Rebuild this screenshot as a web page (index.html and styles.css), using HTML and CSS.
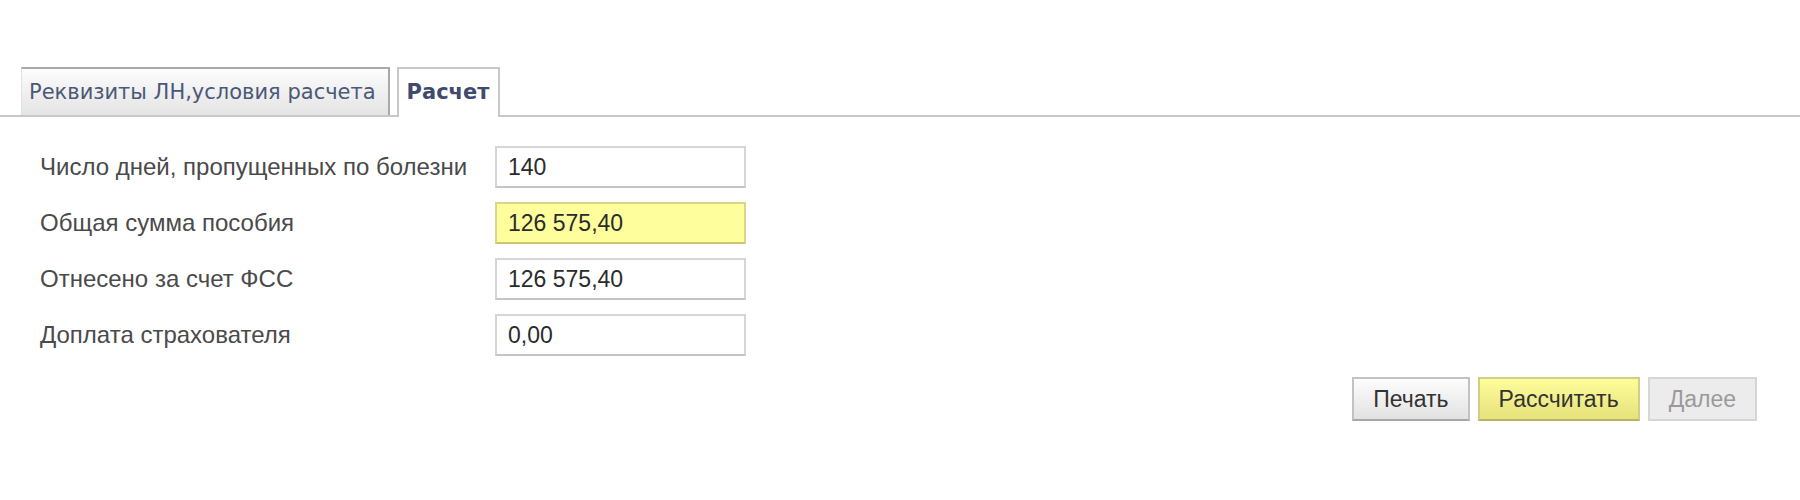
FILE: index.html
```html
<!DOCTYPE html>
<html lang="ru">
<head>
    <meta charset="UTF-8">
    <title>Расчет пособия</title>
    <link rel="stylesheet" href="styles.css">
</head>
<body>
    <div class="page">
        <div class="tabs">
            <div class="tab">Реквизиты ЛН,условия расчета</div>
            <div class="tab tab-active">Расчет</div>
        </div>

        <div class="form">
            <label class="field-label" for="days">Число дней, пропущенных по болезни</label>
            <input class="field" id="days" type="text" value="140">

            <label class="field-label" for="total">Общая сумма пособия</label>
            <input class="field field-highlight" id="total" type="text" value="126 575,40">

            <label class="field-label" for="fss">Отнесено за счет ФСС</label>
            <input class="field" id="fss" type="text" value="126 575,40">

            <label class="field-label" for="extra">Доплата страхователя</label>
            <input class="field" id="extra" type="text" value="0,00">
        </div>

        <div class="actions">
            <button class="btn">Печать</button>
            <button class="btn btn-primary">Рассчитать</button>
            <button class="btn" disabled>Далее</button>
        </div>
    </div>
</body>
</html>
```

FILE: styles.css
```css
html, body {
    margin: 0;
    padding: 0;
    background: #fff;
    font-family: "Liberation Sans", Arial, sans-serif;
    color: #4a4a4a;
}

.page {
    padding-top: 67px;
}

.tabs {
    display: flex;
    gap: 7px;
    padding-left: 21px;
    border-bottom: 2px solid #c8c8c8;
    height: 48px;
}

.tab {
    box-sizing: border-box;
    height: 48px;
    padding: 0 12px 0 7px;
    font-family: "DejaVu Sans", Verdana, sans-serif;
    font-size: 21px;
    line-height: 46px;
    color: #4b5878;
    background: linear-gradient(#fcfcfc, #e4e4e4);
    border-top: 2px solid #a9a9a9;
    border-right: 2px solid #a9a9a9;
    border-left: 1px solid #e2e2e2;
}

.tab-active {
    height: 50px;
    padding: 0 9px 0 8px;
    font-weight: bold;
    color: #3f4b6e;
    background: #fff;
    border: 2px solid #c8c8c8;
    border-bottom: none;
}

.form {
    display: grid;
    grid-template-columns: 455px 251px;
    row-gap: 14px;
    align-items: center;
    padding: 29px 0 0 40px;
}

.field-label {
    font-size: 24px;
}

.field {
    box-sizing: border-box;
    height: 42px;
    width: 251px;
    margin: 0;
    padding: 0 11px;
    font-family: "Liberation Sans", Arial, sans-serif;
    font-size: 23px;
    color: #2b2b2b;
    background: #fff;
    border: 2px solid #d6d6d6;
    border-bottom-color: #c4c4c4;
    outline: none;
}

.field-highlight {
    background: #fefe9c;
    border-color: #d8d68a;
    border-bottom-color: #c9c676;
}

.actions {
    display: flex;
    justify-content: flex-end;
    gap: 8px;
    padding: 21px 43px 0 0;
}

.btn {
    box-sizing: border-box;
    height: 44px;
    padding: 0 19px;
    font-family: "Liberation Sans", Arial, sans-serif;
    font-size: 23px;
    color: #333;
    background: linear-gradient(#fdfdfd, #e2e2e2);
    border: 2px solid #c2c2c2;
    border-bottom-color: #a8a8a8;
    border-radius: 0;
}

.btn-primary {
    background: linear-gradient(#fdfd9a, #e6e27c);
    border-color: #d0cf86;
    border-bottom-color: #b8b466;
}

.btn:disabled {
    color: #9a9a9a;
    background: #ececec;
    border-color: #d6d6d6;
}
```
